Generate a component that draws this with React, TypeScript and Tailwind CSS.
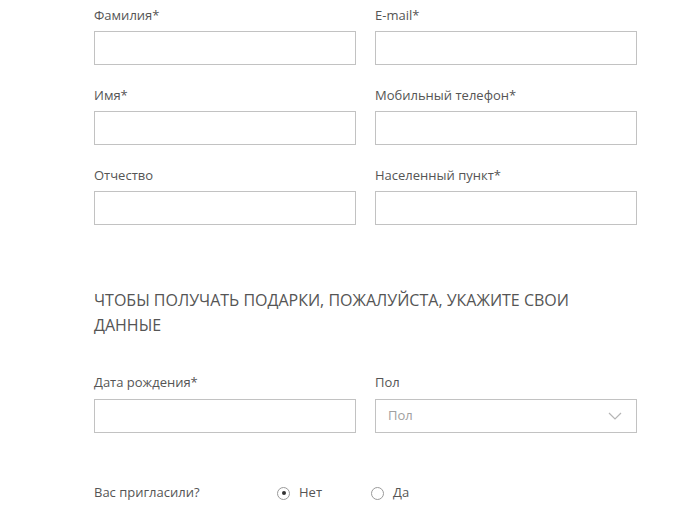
import React from 'react';

const fields: [string, string][] = [
  ['Фамилия*', 'E-mail*'],
  ['Имя*', 'Мобильный телефон*'],
  ['Отчество', 'Населенный пункт*'],
];

function Field({ label }: { label: string }) {
  return (
    <div className="flex flex-col">
      <label className="h-[18px] text-[13px] leading-[18px] text-[#555]">{label}</label>
      <input className="mt-[7px] h-[34px] w-full border border-[#c2c2c2] bg-white px-3 outline-none" />
    </div>
  );
}

function Radio({ label, checked }: { label: string; checked?: boolean }) {
  return (
    <label className="flex items-center gap-[9px]">
      <span className="flex h-[13px] w-[13px] items-center justify-center rounded-full border border-[#9a9a9a] bg-white">
        {checked && <span className="h-[4px] w-[4px] rounded-full bg-[#333]" />}
      </span>
      <span className="text-[13px] text-[#555]">{label}</span>
    </label>
  );
}

export default function App() {
  return (
    <div className="min-h-[518px] bg-white font-['Open_Sans',sans-serif]">
      <div className="ml-[94px] w-[543px] pt-[6px]">
        {/* Contact fields */}
        <div className="grid grid-cols-2 gap-x-[19px] gap-y-[21px]">
          {fields.map(([left, right]) => (
            <React.Fragment key={left}>
              <Field label={left} />
              <Field label={right} />
            </React.Fragment>
          ))}
        </div>

        <h2 className="mt-[63px] text-[16px] leading-[25px] text-[#555] uppercase">
          Чтобы получать подарки, пожалуйста, укажите свои
          <br />
          данные
        </h2>

        <div className="mt-[35px] grid grid-cols-2 gap-x-[19px]">
          <div className="flex flex-col">
            <label className="h-[18px] text-[13px] leading-[18px] text-[#555]">Дата рождения*</label>
            <input className="mt-[8px] h-[34px] w-full border border-[#c2c2c2] bg-white px-3 outline-none" />
          </div>
          <div className="flex flex-col">
            <label className="h-[18px] text-[13px] leading-[18px] text-[#555]">Пол</label>
            <div className="mt-[8px] flex h-[34px] items-center justify-between border border-[#c2c2c2] bg-white pr-[14px] pl-3">
              <span className="text-[13px] text-[#a0a0a0]">Пол</span>
              <svg width="14" height="8" viewBox="0 0 14 8" fill="none">
                <path d="M1 1l6 6 6-6" stroke="#b5b5b5" strokeWidth="1.2" />
              </svg>
            </div>
          </div>
        </div>

        <div className="mt-[51px] flex h-[18px] items-center">
          <span className="w-[183px] text-[13px] text-[#555]">Вас пригласили?</span>
          <div className="flex items-center gap-[49px]">
            <Radio label="Нет" checked />
            <Radio label="Да" />
          </div>
        </div>
      </div>
    </div>
  );
}
